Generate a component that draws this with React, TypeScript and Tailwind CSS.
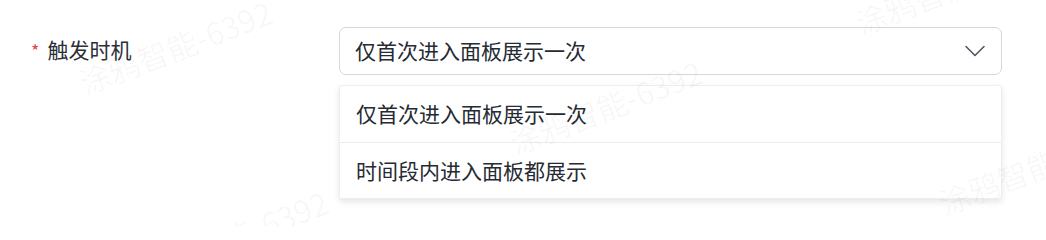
import { ChevronDown } from "lucide-react";

const options = ["仅首次进入面板展示一次", "时间段内进入面板都展示"];

// faint tiled watermark, start points read off the screenshot
const marks = [
    { left: 72, top: 62 },
    { left: 502, top: 122 },
    { left: 932, top: 182 },
    { left: 128, top: 252 },
    { left: 848, top: 2 },
];

export default function App() {
    return (
        <div
            className="relative h-[226px] w-[1046px] overflow-hidden bg-white"
            style={{ fontFamily: '"Noto Sans CJK SC", "Noto Sans", sans-serif' }}
        >
            <div className="flex pt-[27px]">
                {/* LABEL */}
                <div className="flex h-[46px] w-[339px] items-center pl-[31px] text-[21px] text-[#2b2f36]">
                    <span className="mr-[8px] text-[18px] text-[#e5484d]">*</span>
                    <span>触发时机</span>
                </div>

                {/* SELECT + MENU */}
                <div className="flex w-[663px] flex-col">
                    <div className="flex h-[48px] items-center justify-between rounded-[7px] border border-[#d5d7de] bg-white pl-[15px] pr-[8px]">
                        <span className="text-[21px] text-[#252a33]">{options[0]}</span>
                        <ChevronDown className="h-[36px] w-[36px] text-[#4b5160]" strokeWidth={1} />
                    </div>

                    <div className="mt-[10px] flex flex-col rounded-[2px] border border-[#eeeeef] bg-white shadow-[0_3px_6px_rgba(0,0,0,0.1)]">
                        {options.map((o, i) => (
                            <div
                                key={o}
                                className={
                                    "flex h-[56px] items-center pl-[16px] text-[21px] text-[#252a33] " +
                                    (i > 0 ? "border-t border-[#ececee]" : "")
                                }
                            >
                                {o}
                            </div>
                        ))}
                    </div>
                </div>
            </div>

            {/* WATERMARK */}
            {marks.map((m, i) => (
                <span
                    key={i}
                    className="pointer-events-none absolute origin-top-left -rotate-[21deg] whitespace-nowrap text-[31px] text-black/[0.035]"
                    style={{ left: m.left, top: m.top }}
                >
                    涂鸦智能-6392
                </span>
            ))}
        </div>
    );
}
